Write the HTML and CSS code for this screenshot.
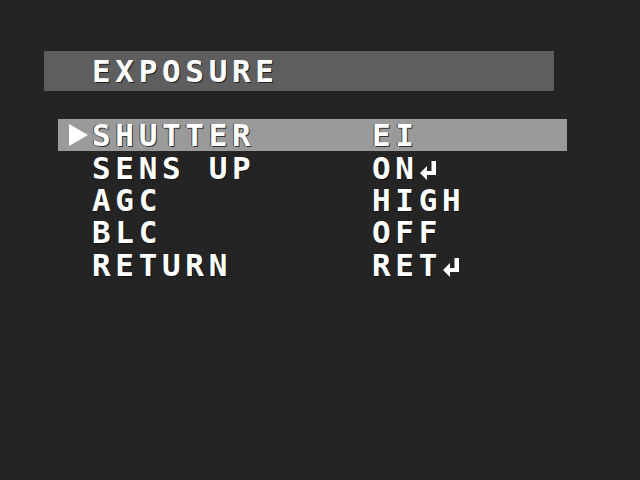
FILE: index.html
```html
<!DOCTYPE html>
<html lang="en">
<head>
    <meta charset="UTF-8">
    <title>Exposure | Camera OSD</title>
    <link rel="stylesheet" href="styles.css">
</head>
<body>
    <div class="osd">
        <div class="osd-title">EXPOSURE</div>
        <div class="osd-menu">
            <div class="osd-row selected">
                <span class="cursor">
                    <svg width="19" height="22" viewBox="0 0 19 22"><path d="M0 0 L19 11 L0 22 Z" fill="#fff"/></svg>
                </span>
                <span class="label">SHUTTER</span>
                <span class="value">EI</span>
            </div>
            <div class="osd-row">
                <span class="cursor"></span>
                <span class="label">SENS UP</span>
                <span class="value">ON<span class="enter"><svg width="16" height="19" viewBox="0 0 16 19"><path d="M11.5 0 H16 V14 H6 V10 H11.5 Z M0 12 L7 5 V19 Z" fill="#fff"/></svg></span></span>
            </div>
            <div class="osd-row">
                <span class="cursor"></span>
                <span class="label">AGC</span>
                <span class="value">HIGH</span>
            </div>
            <div class="osd-row">
                <span class="cursor"></span>
                <span class="label">BLC</span>
                <span class="value">OFF</span>
            </div>
            <div class="osd-row">
                <span class="cursor"></span>
                <span class="label">RETURN</span>
                <span class="value">RET<span class="enter"><svg width="16" height="19" viewBox="0 0 16 19"><path d="M11.5 0 H16 V14 H6 V10 H11.5 Z M0 12 L7 5 V19 Z" fill="#fff"/></svg></span></span>
            </div>
        </div>
    </div>
</body>
</html>
```

FILE: styles.css
```css
body {
    margin: 0;
    width: 640px;
    height: 480px;
    background: #242424;
    overflow: hidden;
    font-family: "DejaVu Sans Mono", "Liberation Mono", monospace;
    font-weight: bold;
    color: #fff;
}
.osd {
    padding-top: 51px;
}
.osd-title {
    margin-left: 44px;
    width: 510px;
    height: 40px;
    background: #5e5e5e;
    box-sizing: border-box;
    padding-left: 48px;
    font-size: 31px;
    line-height: 40px;
    letter-spacing: 4.67px;
    text-shadow: 1px 1px 0 #222;
}
.osd-menu {
    margin-top: 28px;
    margin-left: 58px;
    width: 509px;
}
.osd-row {
    display: flex;
    align-items: center;
    height: 32.4px;
    padding-left: 10.7px;
    font-size: 31px;
    line-height: 32px;
    letter-spacing: 4.67px;
    text-shadow: 1px 1px 0 #111;
}
.osd-row.selected {
    background: #9a9a9a;
    text-shadow: 1px 1px 0 #333, -1px 0 0 #444;
}
.cursor {
    display: flex;
    align-items: center;
    width: 23.33px;
    height: 100%;
}
.label {
    width: 280px;
}
.enter {
    display: inline-block;
    width: 23.33px;
    vertical-align: -1px;
}
.enter svg {
    display: block;
    margin-left: 1.3px;
}
```
